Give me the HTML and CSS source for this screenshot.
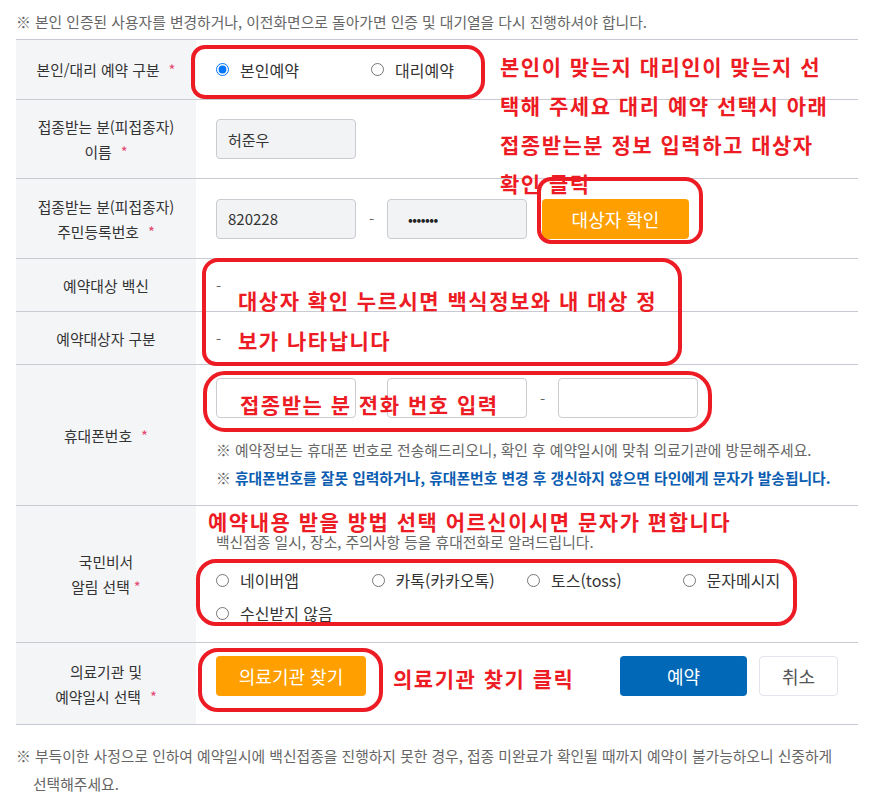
FILE: index.html
```html
<!DOCTYPE html>
<html lang="ko">
<head>
<meta charset="utf-8">
<title>예약</title>
<link rel="stylesheet" href="styles.css">
</head>
<body>
<div class="page">
  <p class="top-note">※ 본인 인증된 사용자를 변경하거나, 이전화면으로 돌아가면 인증 및 대기열을 다시 진행하셔야 합니다.</p>

  <div class="form">
    <div class="row r-sel">
      <div class="th"><p class="th-text">본인/대리 예약 구분<span class="req">*</span></p></div>
      <div class="td">
        <label class="radio"><input type="radio" name="who" checked><span>본인예약</span></label>
        <label class="radio"><input type="radio" name="who"><span>대리예약</span></label>
      </div>
    </div>

    <div class="row r-name">
      <div class="th"><p class="th-text">접종받는 분(피접종자)<br>이름<span class="req">*</span></p></div>
      <div class="td">
        <input class="field readonly" type="text" value="허준우" readonly>
      </div>
    </div>

    <div class="row r-rrn">
      <div class="th"><p class="th-text">접종받는 분(피접종자)<br>주민등록번호<span class="req">*</span></p></div>
      <div class="td">
        <input class="field readonly" type="text" value="820228" readonly>
        <span class="dash">-</span>
        <input class="field readonly pw" type="password" value="1234567" readonly>
        <button class="btn btn-orange btn-check" type="button">대상자 확인</button>
      </div>
    </div>

    <div class="row r-info">
      <div class="th"><p class="th-text">예약대상 백신</p></div>
      <div class="td value">-</div>
    </div>

    <div class="row r-info">
      <div class="th"><p class="th-text">예약대상자 구분</p></div>
      <div class="td value">-</div>
    </div>

    <div class="row r-phone">
      <div class="th"><p class="th-text">휴대폰번호<span class="req">*</span></p></div>
      <div class="td col">
        <div class="phone">
          <input class="field" type="text">
          <span class="dash">-</span>
          <input class="field" type="text">
          <span class="dash">-</span>
          <input class="field" type="text">
        </div>
        <p class="hint first">※ 예약정보는 휴대폰 번호로 전송해드리오니, 확인 후 예약일시에 맞춰 의료기관에 방문해주세요.</p>
        <p class="hint">※ <strong class="warn">휴대폰번호를 잘못 입력하거나, 휴대폰번호 변경 후 갱신하지 않으면 타인에게 문자가 발송됩니다.</strong></p>
      </div>
    </div>

    <div class="row r-alarm">
      <div class="th"><p class="th-text">국민비서<br>알림 선택<span class="req tight">*</span></p></div>
      <div class="td col">
        <p class="desc">백신접종 일시, 장소, 주의사항 등을 휴대전화로 알려드립니다.</p>
        <div class="options">
          <label class="radio"><input type="radio" name="alarm"><span>네이버앱</span></label>
          <label class="radio"><input type="radio" name="alarm"><span>카톡(카카오톡)</span></label>
          <label class="radio"><input type="radio" name="alarm"><span>토스(toss)</span></label>
          <label class="radio"><input type="radio" name="alarm"><span>문자메시지</span></label>
          <label class="radio"><input type="radio" name="alarm"><span>수신받지 않음</span></label>
        </div>
      </div>
    </div>

    <div class="row r-hosp">
      <div class="th"><p class="th-text">의료기관 및<br>예약일시 선택<span class="req">*</span></p></div>
      <div class="td top">
        <button class="btn btn-orange btn-hosp" type="button">의료기관 찾기</button>
        <div class="actions">
          <button class="btn btn-blue" type="button">예약</button>
          <button class="btn btn-line" type="button">취소</button>
        </div>
      </div>
    </div>
  </div>

  <p class="bottom-note">※ 부득이한 사정으로 인하여 예약일시에 백신접종을 진행하지 못한 경우, 접종 미완료가 확인될 때까지 예약이 불가능하오니 신중하게<br>선택해주세요.</p>

  <!-- red hand-drawn annotations over the form -->
  <div class="anno anno-a">본인이 맞는지 대리인이 맞는지 선<br>택해 주세요 대리 예약 선택시 아래<br>접종받는분 정보 입력하고 대상자<br>확인 클릭</div>
  <div class="anno anno-b">대상자 확인 누르시면 백식정보와 내 대상 정<br>보가 나타납니다</div>
  <div class="anno anno-c">접종받는 분 전화 번호 입력</div>
  <div class="anno anno-d">예약내용 받을 방법 선택 어르신이시면 문자가 편합니다</div>
  <div class="anno anno-e">의료기관 찾기 클릭</div>

  <div class="ring ring-1"></div>
  <div class="ring ring-2"></div>
  <div class="ring ring-3"></div>
  <div class="ring ring-4"></div>
  <div class="ring ring-5"></div>
  <div class="ring ring-6"></div>
</div>
</body>
</html>
```

FILE: styles.css
```css
* { box-sizing: border-box; }

body {
  margin: 0;
  background: #fff;
  color: #333;
  font-family: "Noto Sans CJK KR", "Noto Sans", sans-serif;
  font-size: 14.8px;
}

.page {
  position: relative;
  width: 879px;
  height: 798px;
  padding: 0 21px 0 16px;
  overflow: hidden;
}

.top-note {
  margin: 0 0 7px;
  padding-top: 12px;
  line-height: 20px;
  color: #666;
  white-space: nowrap;
}

.form {
  border-top: 1px solid #c9cad1;
  width: 842px;
}

.row {
  display: grid;
  grid-template-columns: 180px 1fr;
  border-bottom: 1px solid #c9cad1;
  box-sizing: content-box;
}

.r-sel { height: 59px; }
.r-name { height: 78px; }
.r-rrn { height: 79px; }
.r-info { height: 52px; }

.th {
  background: #f4f5f7;
  display: flex;
  align-items: center;
  justify-content: center;
}

.th-text {
  margin: 0;
  text-align: center;
  line-height: 25px;
  color: #333;
}

.req {
  color: #e4466e;
  margin-left: 9px;
}
.req.tight { margin-left: 4px; }

.td {
  display: flex;
  align-items: center;
  padding-left: 20px;
}

.td.value { color: #666; }

.td.col {
  flex-direction: column;
  align-items: flex-start;
}

.r-phone .td { padding: 13px 0 13px 20px; }
.r-alarm .td { padding: 26px 0 19px 20px; }

.td.top {
  align-items: flex-start;
  padding: 13px 20px 28px 20px;
}

.radio {
  display: flex;
  align-items: center;
  gap: 11px;
  width: 155px;
  height: 20px;
  font-size: 16px;
  color: #333;
  white-space: nowrap;
}

.radio input {
  margin: 0;
  width: 13px;
  height: 13px;
  flex: none;
}

.field {
  width: 140px;
  height: 40px;
  border: 1px solid #c9cbd1;
  border-radius: 4px;
  background: #fff;
  padding: 0 11px;
  font-family: inherit;
  font-size: 15px;
  color: #333;
  outline: none;
}

.field.readonly { background: #f2f3f5; }
.field.pw { font-size: 14px; letter-spacing: -0.5px; color: #222; padding-left: 20px; }

.dash {
  width: 31px;
  text-align: center;
  color: #666;
}

.phone {
  display: flex;
  align-items: center;
}

.hint {
  margin: 0;
  line-height: 28px;
  color: #666;
  white-space: nowrap;
}
.hint.first { margin-top: 18px; }

.warn {
  color: #0a5db0;
  font-weight: 700;
}

.desc {
  margin: 0;
  line-height: 20px;
  color: #666;
  white-space: nowrap;
}

.options {
  margin-top: 18px;
  display: grid;
  grid-template-columns: repeat(4, 155.5px);
  row-gap: 13px;
}

.btn {
  height: 40px;
  border: 0;
  border-radius: 4px;
  font-family: inherit;
  font-size: 18px;
  cursor: pointer;
  padding: 0;
}

.btn-orange { background: #ff9f00; color: #fff; }
.btn-check { width: 147px; margin-left: 15px; }
.btn-hosp { width: 150px; }

.actions {
  margin-left: auto;
  display: flex;
  gap: 12px;
}

.btn-blue { background: #0068b6; color: #fff; width: 127px; }
.btn-line { background: #fff; color: #555; width: 79px; border: 1px solid #e3e4ec; }

.bottom-note {
  margin: 17px 0 0;
  line-height: 28px;
  color: #666;
  padding-left: 17px;
  text-indent: -17px;
  white-space: nowrap;
}

/* red annotations drawn over the screenshot */
.anno {
  position: absolute;
  color: #ed1c24;
  font-weight: 700;
  font-size: 21px;
  letter-spacing: 1.5px;
  white-space: nowrap;
}
.anno-a { left: 500px; top: 47px; line-height: 39px; }
.anno-b { left: 238px; top: 280px; line-height: 40px; }
.anno-c { left: 240px; top: 394px; line-height: 20px; }
.anno-d { left: 208px; top: 511px; line-height: 20px; }
.anno-e { left: 393px; top: 668px; line-height: 20px; }

.ring {
  position: absolute;
  border: 4px solid #ed1c24;
  border-radius: 16px;
}
.ring-1 { left: 191px; top: 45px; width: 294px; height: 54px; border-radius: 14px 18px 18px 14px; }
.ring-2 { left: 537px; top: 177px; width: 166px; height: 67px; border-radius: 14px 18px 16px 14px; }
.ring-3 { left: 202px; top: 258px; width: 480px; height: 108px; border-radius: 16px 20px 18px 14px; }
.ring-4 { left: 203px; top: 371px; width: 509px; height: 61px; border-radius: 22px 24px 24px 22px; }
.ring-5 { left: 196px; top: 559px; width: 601px; height: 67px; border-radius: 20px 22px 20px 20px; }
.ring-6 { left: 198px; top: 648px; width: 185px; height: 64px; border-radius: 20px; }
```
